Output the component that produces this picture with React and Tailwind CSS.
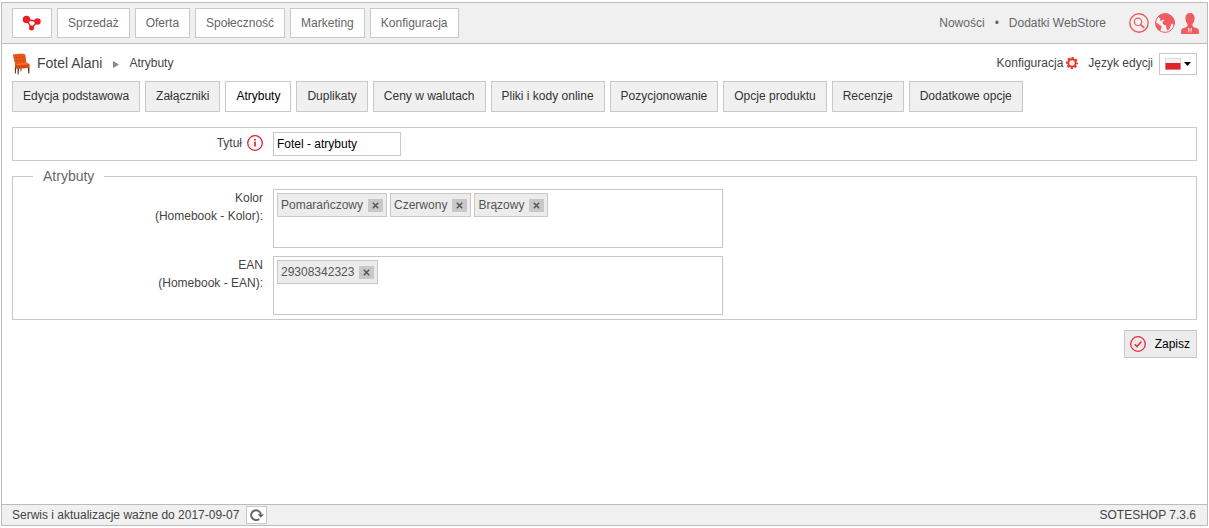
import React, { useState } from 'react';

const MENU = ['Sprzedaż', 'Oferta', 'Społeczność', 'Marketing', 'Konfiguracja'];

const TABS = [
  'Edycja podstawowa',
  'Załączniki',
  'Atrybuty',
  'Duplikaty',
  'Ceny w walutach',
  'Pliki i kody online',
  'Pozycjonowanie',
  'Opcje produktu',
  'Recenzje',
  'Dodatkowe opcje',
];

const LogoIcon = () => (
  <svg className="w-5 h-4" viewBox="0 0 20 16" fill="none" aria-hidden="true">
    <path d="M4.500 4.500L15.500 6.500L9.500 13Z" stroke="#ed1c24" strokeWidth="1.400" />
    <circle cx="4.500" cy="4.500" r="3.700" fill="#ed1c24" />
    <circle cx="15.500" cy="6.500" r="3.200" fill="#ed1c24" />
    <circle cx="9.500" cy="13" r="2.500" fill="#ed1c24" />
  </svg>
);

const SearchIcon = () => (
  <svg className="w-5 h-5" viewBox="0 0 20 20" fill="none" stroke="#f05b62" aria-hidden="true">
    <circle cx="10" cy="10" r="9.200" strokeWidth="1.400" />
    <circle cx="9" cy="8.800" r="3.700" strokeWidth="1.200" />
    <path d="M11.800 11.600L14.800 14.600" strokeWidth="1.800" strokeLinecap="round" />
  </svg>
);

const GlobeIcon = () => (
  <svg className="w-5 h-5" viewBox="0 0 20 20" aria-hidden="true">
    <circle cx="10" cy="10" r="9.400" fill="#f0f0f0" stroke="#f05b62" strokeWidth="1" />
    <path
      d="M3.200 3.400C6.200 0.200 12 -0.800 16 2.200C18.800 4.400 20 7.400 19.800 10.600L18.400 12.400L17.200 10.600L16 11.200L15.600 13.600L14 16.400L12.400 17.600L11.400 15.200L11.200 12.600L9.400 12L7.600 10.600L7.800 8.600L9.600 7.200L8.200 6.400L6.400 7.800L4.800 7.200L5.600 5.400L4.400 5Z"
      fill="#f05b62"
    />
    <path d="M0.300 9.800L2.400 10.200L4.600 12L6.800 13.200L6 15.600L5.200 18.400C2 16.600 0.300 13.400 0.300 9.800Z" fill="#f05b62" />
  </svg>
);

const UserIcon = () => (
  <svg className="w-[18px] h-[21px]" viewBox="0 0 18 21" aria-hidden="true">
    <path
      d="M9 0C11.900 0 13.600 2 13.600 5C13.600 7.400 12.700 9.700 11.500 11C11.300 12.900 11.700 13.800 13.200 14.300L16.500 15.500C17.500 15.900 17.900 16.700 17.900 18V21H0.100V18C0.100 16.700 0.500 15.900 1.500 15.500L4.800 14.300C6.300 13.800 6.700 12.900 6.500 11C5.300 9.700 4.400 7.400 4.400 5C4.400 2 6.100 0 9 0Z"
      fill="#f05b62"
    />
    <path d="M7 14.800L9 15.800L11 14.800L10.400 19.600H7.600Z" fill="#f0f0f0" />
    <path d="M8.300 15.600H9.700L9.500 17L9.900 19.400L9 20.200L8.100 19.400L8.500 17Z" fill="#f05b62" />
  </svg>
);

const ChairIcon = () => (
  <svg className="w-[18px] h-[22px]" viewBox="0 0 18 22" aria-hidden="true">
    <path d="M3 14L4.200 14.500L3.800 20.500H2.800ZM5.600 15.500L7 15.500L6.600 21.500H5.600ZM15.800 14.500H17.400V20.500H16.400ZM8.500 15H9.500L9.300 18.500H8.600Z" fill="#5b2a1c" />
    <path d="M0.800 1.600C4.500 0.800 9.500 0.600 13.200 1.200L14.600 10.200L3.200 11.200Z" fill="#ea5a1c" />
    <path d="M3.200 10.800L14.600 9.800L17.600 11.200V14.800L5.400 16L2.800 14.600Z" fill="#d8490f" />
    <path d="M3.200 10.800L14.600 9.800L17.400 11.200L5.600 12.400Z" fill="#f2712f" />
    <path d="M3.600 1.500L5.600 10.500M6.800 1.200L8.300 10.300M10 1.200L11.400 10M1.400 4.500L13.600 4M2.200 7.600L14 7" stroke="#c9420c" strokeWidth="0.500" fill="none" />
  </svg>
);

const GearIcon = () => (
  <svg className="w-3 h-3" viewBox="0 0 12 12" fill="none" stroke="#ee2b24" aria-hidden="true">
    <circle cx="6" cy="6" r="3.700" strokeWidth="2" />
    <circle cx="6" cy="6" r="5.200" strokeWidth="1.700" strokeDasharray="2.240 1.844" strokeDashoffset="1.120" />
  </svg>
);

const FlagIcon = () => (
  <svg className="w-4 h-3" viewBox="0 0 16 12" aria-hidden="true">
    <rect x="0.500" y="0.500" width="15" height="11" fill="#f4f4f4" stroke="#dcdcdc" />
    <rect x="0.500" y="5" width="15" height="6.500" fill="#e0202c" />
  </svg>
);

const InfoIcon = () => (
  <svg className="w-4 h-4" viewBox="0 0 16 16" fill="none" stroke="#e31e30" aria-hidden="true">
    <circle cx="8" cy="8" r="7.300" strokeWidth="1.300" />
    <path d="M8 6.600V11.600" strokeWidth="1.700" />
    <path d="M8 4V5.600" strokeWidth="1.700" />
  </svg>
);

const CheckIcon = () => (
  <svg className="w-4 h-4" viewBox="0 0 16 16" fill="none" stroke="#e62e3c" aria-hidden="true">
    <circle cx="8" cy="8" r="7.300" strokeWidth="1.300" />
    <path d="M4.600 8.400L7 10.600L11.400 5.400" strokeWidth="1.500" />
  </svg>
);

const RefreshIcon = () => (
  <svg className="w-[14px] h-3" viewBox="0 0 14 12" aria-hidden="true">
    <path d="M9.200 9.900A4.900 4.900 0 1 1 10.900 5.500" fill="none" stroke="#666" strokeWidth="1.900" />
    <path d="M7.600 5.200H14L10.800 8.800Z" fill="#666" />
  </svg>
);

const Tag = ({ label, onRemove }) => (
  <li className="flex items-center gap-[5px] h-6 px-[3px] bg-[#ececec] border border-[#c8c8c8] text-[#555]">
    <span className="pb-px">{label}</span>
    <button
      type="button"
      onClick={onRemove}
      aria-label={`Usuń ${label}`}
      className="flex items-center justify-center w-[15px] h-[13px] bg-[#c8c8c8] hover:bg-[#bbb]"
    >
      <svg className="w-[7px] h-[7px]" viewBox="0 0 7 7" stroke="#555" strokeWidth="1.500" aria-hidden="true">
        <path d="M0.800 0.800L6.200 6.200M6.200 0.800L0.800 6.200" />
      </svg>
    </button>
  </li>
);

const TagField = ({ name, source, initial }) => {
  const [tags, setTags] = useState(initial);

  return (
    <div className="flex items-start gap-[10px]">
      <div className="w-[250px] shrink-0 text-right leading-[18px]">
        {name}
        <br />({source}):
      </div>
      <ul
        aria-label={name}
        className="flex flex-wrap content-start gap-[3px] w-full max-w-[450px] min-h-[59px] p-[3px] border border-[#c8c8c8]"
      >
        {tags.map((tag) => (
          <Tag key={tag} label={tag} onRemove={() => setTags(tags.filter((t) => t !== tag))} />
        ))}
      </ul>
    </div>
  );
};

const App = () => {
  const [title, setTitle] = useState('Fotel - atrybuty');

  return (
    <div className="flex flex-col min-h-screen px-px py-[2px] bg-white font-['Liberation_Sans',Arial,sans-serif] text-xs text-[#444]">
      <div className="flex flex-col grow border border-[#bbb]">
        <header className="flex items-center justify-between h-[41px] pl-[10px] pr-2 bg-[#f0f0f0] border-b border-[#bbb] text-[#666]">
          <nav className="flex gap-[5px]">
            <a href="#" aria-label="Pulpit" className="flex items-center justify-center w-10 h-[30px] bg-white border border-[#c8c8c8]">
              <LogoIcon />
            </a>
            {MENU.map((item) => (
              <a key={item} href="#" className="flex items-center h-[30px] px-[10px] bg-white border border-[#c8c8c8]">
                {item}
              </a>
            ))}
          </nav>
          <div className="flex items-center">
            <a href="#">Nowości</a>
            <span className="px-[10px]">•</span>
            <a href="#">Dodatki WebStore</a>
            <div className="flex items-center gap-[6px] ml-[23px]">
              <button type="button" aria-label="Szukaj"><SearchIcon /></button>
              <button type="button" aria-label="Sklep"><GlobeIcon /></button>
              <button type="button" aria-label="Konto"><UserIcon /></button>
            </div>
          </div>
        </header>

        <main className="grow px-[10px] pt-[9px]">
          <div className="flex items-center justify-between h-[22px]">
            <div className="flex items-center">
              <ChairIcon />
              <h1 className="ml-[7px] pb-[2px] text-sm">Fotel Alani</h1>
              <svg className="w-[6px] h-[7px] ml-[11px] mr-[10px]" viewBox="0 0 6 7" aria-hidden="true">
                <path d="M0 0L6 3.500L0 7Z" fill="#888" />
              </svg>
              <span className="pb-[2px]">Atrybuty</span>
            </div>
            <div className="flex items-center">
              <a href="#" className="flex items-center gap-[3px] pb-[2px]">
                Konfiguracja
                <GearIcon />
              </a>
              <span id="lang-label" className="ml-[10px] mr-[6px] pb-[2px]">Język edycji</span>
              <button
                type="button"
                aria-labelledby="lang-label"
                aria-haspopup="listbox"
                className="flex items-center justify-between w-[38px] h-[22px] px-[5px] border border-[#c8c8c8]"
              >
                <FlagIcon />
                <svg className="w-[7px] h-1" viewBox="0 0 7 4" aria-hidden="true">
                  <path d="M0 0H7L3.500 4Z" fill="#000" />
                </svg>
              </button>
            </div>
          </div>

          <nav className="flex flex-wrap gap-[5px] mt-[6px]">
            {TABS.map((tab) => (
              <a
                key={tab}
                href="#"
                className={`flex items-center h-[31px] px-[10px] pb-[2px] border border-[#c8c8c8] ${
                  tab === 'Atrybuty' ? 'bg-white text-black' : 'bg-[#f0f0f0] text-[#333]'
                }`}
              >
                {tab}
              </a>
            ))}
          </nav>

          <form onSubmit={(e) => e.preventDefault()}>
            <div className="flex items-center h-[34px] mt-[15px] border border-[#c8c8c8]">
              <div className="flex items-center justify-end gap-[5px] w-[250px] shrink-0 mr-[10px] pb-[2px]">
                <label htmlFor="title">Tytuł</label>
                <button type="button" aria-label="Informacja"><InfoIcon /></button>
              </div>
              <input
                id="title"
                type="text"
                value={title}
                onChange={(e) => setTitle(e.target.value)}
                className="w-32 h-6 px-[3px] bg-white border border-[#c8c8c8] text-black"
              />
            </div>

            <fieldset className="mt-[5px] pb-1 border border-[#c8c8c8]">
              <legend className="ml-5 px-[10px] text-sm text-[#666]">Atrybuty</legend>
              <div className="flex flex-col gap-2 pt-[3px]">
                <TagField name="Kolor" source="Homebook - Kolor" initial={['Pomarańczowy', 'Czerwony', 'Brązowy']} />
                <TagField name="EAN" source="Homebook - EAN" initial={['29308342323']} />
              </div>
            </fieldset>

            <div className="flex justify-end mt-[10px]">
              <button
                type="submit"
                className="flex items-center gap-[9px] h-7 pl-[5px] pr-[6px] bg-[#ececec] border border-[#c8c8c8] text-black"
              >
                <CheckIcon />
                Zapisz
              </button>
            </div>
          </form>
        </main>

        <footer className="flex items-center justify-between h-[21px] pl-[10px] pr-[11px] bg-[#f0f0f0] border-t border-[#bbb]">
          <div className="flex items-center gap-[7px]">
            Serwis i aktualizacje ważne do 2017-09-07
            <button
              type="button"
              aria-label="Odśwież"
              className="flex items-center justify-center w-[21px] h-[18px] bg-white border border-[#c8c8c8]"
            >
              <RefreshIcon />
            </button>
          </div>
          <span>SOTESHOP 7.3.6</span>
        </footer>
      </div>
    </div>
  );
};

export default App;
